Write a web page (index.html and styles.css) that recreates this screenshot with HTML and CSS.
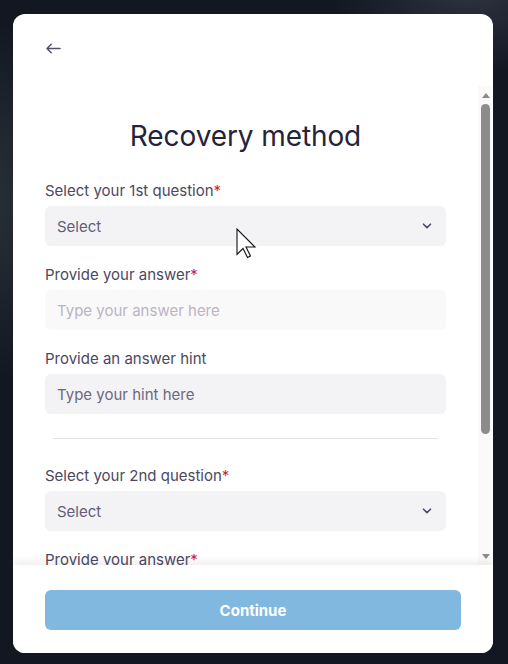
FILE: index.html
```html
<!DOCTYPE html>
<html lang="en">
<head>
<meta charset="utf-8">
<title>Recovery method</title>
<link rel="stylesheet" href="styles.css">
</head>
<body>
<div class="backdrop">
  <section class="card">
    <header class="card-header">
      <button class="back" aria-label="Back">
        <svg width="16" height="16" viewBox="0 0 16 16" fill="none" stroke="currentColor" stroke-width="1.5" stroke-linecap="round" stroke-linejoin="round">
          <path d="M15 8.5H2.2M6.2 4.3L2 8.5l4.2 4.2"/>
        </svg>
      </button>
    </header>

    <div class="card-body">
      <div class="scroll-content">
        <h1 class="title">Recovery method</h1>

        <div class="field">
          <label class="label">Select your 1st question<span class="req">*</span></label>
          <div class="select">
            <span>Select</span>
            <svg class="chev" width="10" height="6" viewBox="0 0 10 6" fill="none" stroke="currentColor" stroke-width="1.6" stroke-linecap="round" stroke-linejoin="round"><path d="M1.5 1.2L5 4.6l3.5-3.4"/></svg>
          </div>
        </div>

        <div class="field">
          <label class="label">Provide your answer<span class="req">*</span></label>
          <input class="input input-muted" type="text" placeholder="Type your answer here" disabled>
        </div>

        <div class="field">
          <label class="label">Provide an answer hint</label>
          <input class="input" type="text" placeholder="Type your hint here">
        </div>

        <hr class="divider">

        <div class="field">
          <label class="label">Select your 2nd question<span class="req">*</span></label>
          <div class="select">
            <span>Select</span>
            <svg class="chev" width="10" height="6" viewBox="0 0 10 6" fill="none" stroke="currentColor" stroke-width="1.6" stroke-linecap="round" stroke-linejoin="round"><path d="M1.5 1.2L5 4.6l3.5-3.4"/></svg>
          </div>
        </div>

        <div class="field">
          <label class="label">Provide your answer<span class="req">*</span></label>
          <input class="input input-muted" type="text" placeholder="Type your answer here" disabled>
        </div>
      </div>

      <div class="scrollbar" aria-hidden="true">
        <div class="sb-btn"><span class="tri tri-up"></span></div>
        <div class="sb-track"><div class="sb-thumb"></div></div>
        <div class="sb-btn"><span class="tri tri-down"></span></div>
      </div>
    </div>

    <footer class="card-footer">
      <button class="continue">Continue</button>
    </footer>
  </section>

  <svg class="pointer" width="22" height="32" viewBox="0 0 22 32">
    <path d="M1 1V26.5L7 20.5L11.5 29.5L14.5 28L10 19H19Z" fill="#fff" stroke="#111" stroke-width="1.1" stroke-linejoin="miter"/>
  </svg>
</div>
</body>
</html>
```

FILE: styles.css
```css
* { box-sizing: border-box; }

html, body {
  margin: 0;
  height: 100%;
}

body {
  font-family: Inter, "Open Sans", "Liberation Sans", sans-serif;
  background: #131722;
  overflow: hidden;
}

.backdrop {
  position: relative;
  width: 508px;
  height: 664px;
  padding: 14px 15px 11px 13px;
  background:
    radial-gradient(ellipse 160px 260px at -20px 200px, rgba(60, 75, 70, 0.55), transparent 70%),
    radial-gradient(ellipse 200px 120px at 470px -10px, rgba(70, 74, 90, 0.55), transparent 70%),
    #131722;
}

.card {
  width: 480px;
  height: 639px;
  background: #fff;
  border-radius: 12px;
  display: flex;
  flex-direction: column;
  overflow: hidden;
}

.card-header {
  height: 72px;
  flex: none;
  padding: 26px 32px 0;
}

.back {
  display: block;
  width: 16px;
  height: 16px;
  padding: 0;
  border: 0;
  background: none;
  color: #574d6e;
}
.back svg { display: block; }

.card-body {
  flex: 1;
  min-height: 0;
  display: flex;
  padding-right: 1px;
}

.scroll-content {
  flex: 1;
  min-width: 0;
  overflow: hidden;
  padding: 32px 32px 0;
}

.title {
  margin: 0 0 27px;
  font-size: 28px;
  line-height: 36px;
  font-weight: 400;
  color: #25233a;
  text-align: center;
  letter-spacing: -0.1px;
}

.field {
  display: flex;
  flex-direction: column;
  gap: 5px;
  margin-bottom: 19px;
}

.label {
  font-size: 15px;
  line-height: 20px;
  color: #4c4862;
}

.req { color: #d3213b; }

.select,
.input {
  height: 40px;
  border-radius: 6px;
  background: #f3f3f6;
  border: 0;
  font: inherit;
  font-size: 15px;
  color: #625d78;
  padding: 0 12px;
}

.select {
  display: flex;
  align-items: center;
  justify-content: space-between;
  padding-right: 14px;
}

.chev { color: #4f4868; display: block; }

.input { width: 100%; outline: none; }
.input::placeholder { color: #6d6880; opacity: 1; }

.input-muted { background: #f9f9fa; }
.input-muted::placeholder { color: #bcb4c1; }

.divider {
  border: 0;
  height: 1px;
  background: #e5e5e9;
  margin: 24px 8px 27px;
}

/* scrollbar drawn beside the scroll content */
.scrollbar {
  width: 14px;
  flex: none;
  display: flex;
  flex-direction: column;
  background: #fafafa;
}

.sb-btn {
  height: 17px;
  flex: none;
  display: flex;
  align-items: center;
  justify-content: center;
}

.tri {
  width: 0;
  height: 0;
  border-left: 4px solid transparent;
  border-right: 4px solid transparent;
  margin-left: 1px;
}
.tri-up { border-bottom: 5px solid #8b8b8b; margin-top: 1px; }
.tri-down { border-top: 5px solid #8b8b8b; }

.sb-track {
  flex: 1;
  padding-top: 1px;
}

.sb-thumb {
  width: 9px;
  height: 330px;
  margin-left: 3px;
  border-radius: 5px;
  background: #8c8c8c;
}

.card-footer {
  height: 88px;
  flex: none;
  padding: 25px 32px 0;
  background: #fff;
  box-shadow: 0 -3px 8px rgba(40, 40, 60, 0.09);
  position: relative;
}

.continue {
  display: block;
  width: 100%;
  height: 40px;
  border: 0;
  border-radius: 6px;
  background: #80b8e0;
  color: #fff;
  font-family: inherit;
  font-size: 15px;
  font-weight: 700;
}

.pointer {
  position: absolute;
  left: 236px;
  top: 228px;
}
```
